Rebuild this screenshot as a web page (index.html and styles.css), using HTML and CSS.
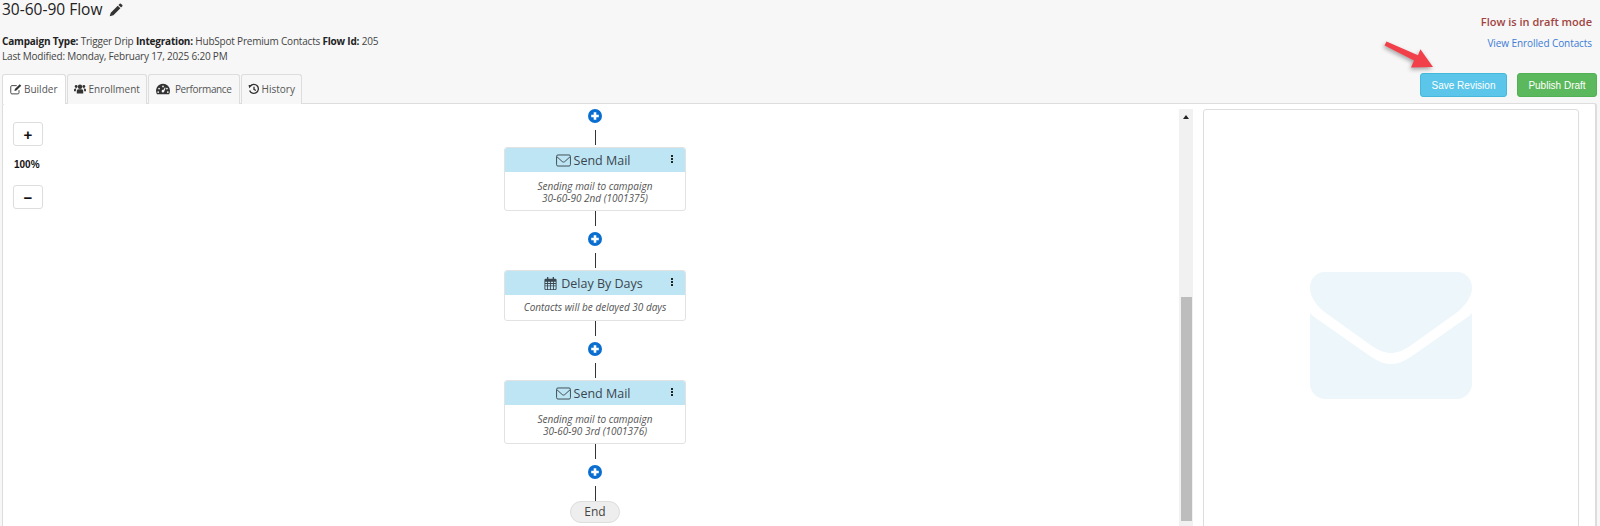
FILE: index.html
```html
<!DOCTYPE html>
<html lang="en">
<head>
<meta charset="utf-8">
<title>30-60-90 Flow</title>
<link rel="stylesheet" href="styles.css">
</head>
<body>
<header class="top">
  <div class="info">
    <h1 class="title">30-60-90 Flow
      <svg class="pencil" viewBox="0 0 16 16"><path d="M12.200 .8a1 1 0 0 1 1.400 0l1.600 1.600a1 1 0 0 1 0 1.400L13.800 5.200 10.800 2.200z M10 3L13 6 5 14 .8 15.200 2 11z"/></svg>
    </h1>
    <p class="meta"><b>Campaign Type:</b> Trigger Drip <b>Integration:</b> HubSpot Premium Contacts <b>Flow Id:</b> 205</p>
    <p class="meta">Last Modified: Monday, February 17, 2025 6:20 PM</p>
  </div>
  <div class="status">
    <div class="draft">Flow is in draft mode</div>
    <a class="enrolled" href="#">View Enrolled Contacts</a>
  </div>
</header>

<div class="bar">
  <nav class="tabs">
    <a class="tab tab-build active" href="#"><svg class="ti" viewBox="0 0 16 16"><path class="ol" d="M12 9.500V13a1.500 1.500 0 0 1-1.500 1.500h-8A1.500 1.500 0 0 1 1 13V5a1.500 1.500 0 0 1 1.500-1.500H9"/><path d="M13 1.500l2 2-6.500 6.500-2.600.6.6-2.600z"/></svg>Builder</a>
    <a class="tab tab-enrol" href="#"><svg class="ti" viewBox="0 0 16 16"><circle cx="8" cy="5" r="2.900"/><circle cx="2.900" cy="4.600" r="1.900"/><circle cx="13.100" cy="4.600" r="1.900"/><path d="M3.700 14V10.500C3.700 9 5 8.400 8 8.400s4.300.6 4.300 2.100V14z"/><path d="M0 11V9c0-1.300 1-1.800 3.400-1.800-.7.6-.9 1.400-.9 2.300V11zM16 11V9c0-1.300-1-1.800-3.400-1.800.7.6.9 1.400.9 2.300V11z"/></svg>Enrollment</a>
    <a class="tab tab-perf" href="#"><svg class="ti" viewBox="0 0 16 16"><path fill-rule="evenodd" d="M8 2a8 8 0 0 1 8 8c0 1.500-.4 2.900-1.100 4H1.100A8 8 0 0 1 8 2zM8 4a1 1 0 1 0 0 2 1 1 0 0 0 0-2zM3.500 6.500a1 1 0 1 0 0 2 1 1 0 0 0 0-2zM12.500 6.500a1 1 0 1 0 0 2 1 1 0 0 0 0-2zM2.500 10.500a1 1 0 1 0 0 2 1 1 0 0 0 0-2zM13.500 10.500a1 1 0 1 0 0 2 1 1 0 0 0 0-2zM8 9a1.500 1.500 0 1 0 1.300 2.200L11 6.500l-.9-.3L8.400 9z"/></svg>Performance</a>
    <a class="tab tab-hist" href="#"><svg class="ti" viewBox="0 0 16 16"><path class="ol hv" d="M3 4.200A6 6 0 1 1 2.200 10"/><path d="M.8 2.500L5.800 2.800 1.600 7z"/><path class="ol hv" d="M8 5v3.500l2.500 1.500"/></svg>History</a>
  </nav>
  <div class="actions">
    <button class="btn save" type="button">Save Revision</button>
    <button class="btn publish" type="button">Publish Draft</button>
  </div>
</div>

<main class="panel">
  <section class="canvas">
    <div class="zoom">
      <button class="zbtn" type="button">+</button>
      <span class="zpct">100%</span>
      <button class="zbtn" type="button">−</button>
    </div>
    <div class="flow">
      <svg class="plus" viewBox="0 0 14 14"><circle cx="7" cy="7" r="7"/><path d="M3.200 5.700h2.500V3.200h2.600v2.500h2.500v2.600H8.300v2.500H5.700V8.300H3.200z"/></svg>
      <span class="line lower"></span>

      <article class="node">
        <div class="node-head"><svg class="ni" viewBox="0 0 16 13"><rect class="ol" x=".6" y=".6" width="14.800" height="11.800" rx="1.500"/><path class="ol" d="M1 2.500l5.500 5c1 .9 2 .9 3 0l5.500-5"/></svg>Send Mail<span class="dots"></span></div>
        <div class="node-body">Sending mail to campaign<br>30-60-90 2nd (1001375)</div>
      </article>

      <span class="line upper"></span>
      <svg class="plus" viewBox="0 0 14 14"><circle cx="7" cy="7" r="7"/><path d="M3.200 5.700h2.500V3.200h2.600v2.500h2.500v2.600H8.300v2.500H5.700V8.300H3.200z"/></svg>
      <span class="line lower"></span>

      <article class="node">
        <div class="node-head"><svg class="ni" viewBox="0 0 14 15"><path fill-rule="evenodd" d="M3 0h1.500v2H9.500V0H11v2h1.500A1.500 1.500 0 0 1 14 3.500v10a1.500 1.500 0 0 1-1.500 1.500h-11A1.500 1.500 0 0 1 0 13.500v-10A1.500 1.500 0 0 1 1.500 2H3zM1 5.500V7h2V5.500zM4 5.500V7h2.500V5.500zM7.500 5.500V7H10V5.500zM11 5.500V7h2V5.500zM1 8v1.800h2V8zM4 8v1.800h2.500V8zM7.500 8v1.800H10V8zM11 8v1.800h2V8zM1 10.800V13a1 1 0 0 0 1 1h1v-3.200zM4 10.800V14h2.500v-3.200zM7.500 10.800V14H10v-3.200zM11 10.800V14h1a1 1 0 0 0 1-1v-2.200z"/></svg>Delay By Days<span class="dots"></span></div>
        <div class="node-body single">Contacts will be delayed 30 days</div>
      </article>

      <span class="line upper"></span>
      <svg class="plus" viewBox="0 0 14 14"><circle cx="7" cy="7" r="7"/><path d="M3.200 5.700h2.500V3.200h2.600v2.500h2.500v2.600H8.300v2.500H5.700V8.300H3.200z"/></svg>
      <span class="line lower"></span>

      <article class="node">
        <div class="node-head"><svg class="ni" viewBox="0 0 16 13"><rect class="ol" x=".6" y=".6" width="14.800" height="11.800" rx="1.500"/><path class="ol" d="M1 2.500l5.500 5c1 .9 2 .9 3 0l5.500-5"/></svg>Send Mail<span class="dots"></span></div>
        <div class="node-body">Sending mail to campaign<br>30-60-90 3rd (1001376)</div>
      </article>

      <span class="line upper"></span>
      <svg class="plus" viewBox="0 0 14 14"><circle cx="7" cy="7" r="7"/><path d="M3.200 5.700h2.500V3.200h2.600v2.500h2.500v2.600H8.300v2.500H5.700V8.300H3.200z"/></svg>
      <span class="line lower last"></span>
      <div class="end">End</div>
    </div>
  </section>

  <div class="scroll"><span class="scroll-up"></span><span class="thumb"></span></div>

  <aside class="preview">
    <svg class="big-env" viewBox="0 0 162 127"><path d="M15 0H147C156 0 162 7 162 16C162 26 153 36 146 41L100 74C92 79 87 81 81 81C75 81 70 79 62 74L16 41C9 36 0 26 0 16C0 7 6 0 15 0Z"/><path d="M0 41C2 44 6 46 10 49L57 82C66 88 72 92 81 92C90 92 96 88 105 82L152 49C156 46 160 44 162 41V112C162 120 155 127 147 127H15C7 127 0 120 0 112Z"/></svg>
  </aside>
</main>

<svg class="arrow" viewBox="0 0 56 32"><path d="M3.500 4.500L5.500 .5 37 14.200 39.400 8.200 52 26 30 26.500 33 19.500z"/></svg>
</body>
</html>
```

FILE: styles.css
```css
* { box-sizing: border-box; }
html, body { margin: 0; height: 526px; overflow: hidden; }
body {
  background: #f7f7f7;
  color: #444;
  font-family: "Open Sans", "Noto Sans", sans-serif;
  font-size: 10px;
  position: relative;
  padding: 0 3px 0 2px;
}
.top { display: flex; justify-content: space-between; height: 74px; }
.title {
  margin: 0 0 15px;
  font-size: 15.500px;
  line-height: 19px;
  height: 19px;
  font-weight: 400;
  color: #222;
  display: flex;
  align-items: center;
}
.pencil { width: 14px; height: 14px; margin-left: 7px; fill: #333; }
.meta { margin: 0; line-height: 15px; height: 15px; white-space: nowrap; letter-spacing: -.2px; }
.meta b { color: #222; font-weight: 700; }
.status { text-align: right; padding: 14px 5px 0 0; }
.draft { color: #a1443f; font-size: 11px; font-weight: 600; line-height: 16px; margin-bottom: 5px; }
.enrolled { color: #3b7cd6; text-decoration: none; font-size: 10px; letter-spacing: -.08px; line-height: 16px; display: block; }

.bar { display: flex; justify-content: space-between; align-items: flex-start; height: 29px; }
.tabs { display: flex; gap: 1px; }
.tab {
  display: flex;
  align-items: center;
  height: 30px;
  padding: 0 7px 2px 7px;
  border: 1px solid #ddd;
  border-bottom: 0;
  border-radius: 3px 3px 0 0;
  color: #555;
  text-decoration: none;
  font-size: 10px;
  background: #f7f7f7;
  position: relative;
  z-index: 1;
}
.tab.active { background: #fff; }
.ti { width: 12px; height: 12px; margin-right: 2px; fill: #333; }
.tab-build { padding-right: 8px; }
.tab-enrol { padding-left: 6px; padding-right: 6px; }
.tab-perf { letter-spacing: -.35px; }
.tab-perf .ti { width: 14px; height: 14px; margin-right: 5px; }
.tab-hist { padding-left: 6px; padding-right: 6px; }
.ol { fill: none; stroke: #444; stroke-width: 1.300; }
.ol.hv { stroke: #333; stroke-width: 1.800; }
.actions { display: flex; gap: 10px; margin-top: -1px; }
.btn {
  height: 24px;
  border-radius: 3px;
  color: #fff;
  font: 400 10px "Liberation Sans", Arial, sans-serif;
  border: 1px solid;
  padding: 0;
}
.save { width: 87px; background: #5bc6ea; border-color: #46b8da; }
.publish { width: 80px; background: #5cb85c; border-color: #54b054; }

.panel {
  display: flex;
  height: 440px;
  background: #fff;
  border: 1px solid #ddd;
  border-right-width: 2px;
  border-radius: 3px 3px 0 0;
  padding-top: 5px;
}
.canvas { position: relative; width: 1176px; flex: none; }
.zoom {
  position: absolute;
  left: 10px;
  top: 13px;
  display: flex;
  flex-direction: column;
  align-items: flex-start;
}
.zbtn {
  width: 30px;
  height: 24px;
  background: #fff;
  border: 1px solid #ddd;
  border-radius: 3px;
  font: 700 15px/1 "Liberation Sans", Arial, sans-serif;
  color: #111;
  padding: 0;
}
.zpct {
  font: 700 10px/14px "Liberation Sans", Arial, sans-serif;
  color: #111;
  margin: 12px 0 13px 1px;
}
.flow {
  display: flex;
  flex-direction: column;
  align-items: center;
  width: 182px;
  margin-left: 501px;
}
.plus { width: 14px; height: 14px; fill: #0a6ed1; flex: none; }
.plus path { fill: #fff; }
.line { width: 1px; background: #333; display: block; flex: none; }
.line.upper { height: 15px; margin-bottom: 6px; }
.line.lower { height: 15px; margin-top: 7px; margin-bottom: 2px; }
.line.lower.last { margin-bottom: 0; }
.node {
  width: 182px;
  background: #fff;
  border: 1px solid #e2e2e2;
  border-radius: 3px;
  overflow: hidden;
}
.node-head {
  position: relative;
  height: 24px;
  padding-right: 4px;
  background: #bee5f3;
  display: flex;
  align-items: center;
  justify-content: center;
  font-size: 12.500px;
  color: #3b4650;
}
.ni { height: 13px; width: 15px; margin-right: 3px; fill: #3b4650; }
.ni .ol { stroke: #3b4650; stroke-width: 1; }
.dots {
  position: absolute;
  right: 12px;
  top: 7px;
  width: 2px;
  height: 2px;
  background: #222;
  box-shadow: 0 3px 0 #222, 0 6px 0 #222;
}
.node-body {
  height: 38px;
  text-align: center;
  font-size: 10px;
  font-style: italic;
  line-height: 12px;
  color: #555;
  padding-top: 8px;
}
.node-body.single { height: 25px; padding-top: 6px; }
.end {
  width: 50px;
  height: 22px;
  border: 1px solid #ddd;
  border-radius: 11px;
  background: #eee;
  text-align: center;
  font-size: 12px;
  line-height: 20px;
  color: #444;
}
.scroll {
  position: relative;
  width: 14px;
  flex: none;
  background: #f1f1f1;
}
.scroll-up {
  position: absolute;
  left: 4px;
  top: 6px;
  border: 3px solid transparent;
  border-top: 0;
  border-bottom: 4px solid #222;
}
.thumb {
  position: absolute;
  left: 2px;
  right: 1px;
  top: 188px;
  height: 224px;
  background: #bdbdbd;
}
.preview {
  width: 376px;
  margin-left: 10px;
  flex: none;
  border: 1px solid #ddd;
  border-radius: 3px;
  padding: 162px 0 0 106px;
}
.big-env { display: block; width: 162px; height: 127px; fill: #edf6fb; }
.arrow {
  position: absolute;
  left: 1381px;
  top: 41px;
  width: 56px;
  height: 32px;
  fill: #f2404a;
  filter: drop-shadow(-1px 2px 2px rgba(0,0,0,.35));
}
```
